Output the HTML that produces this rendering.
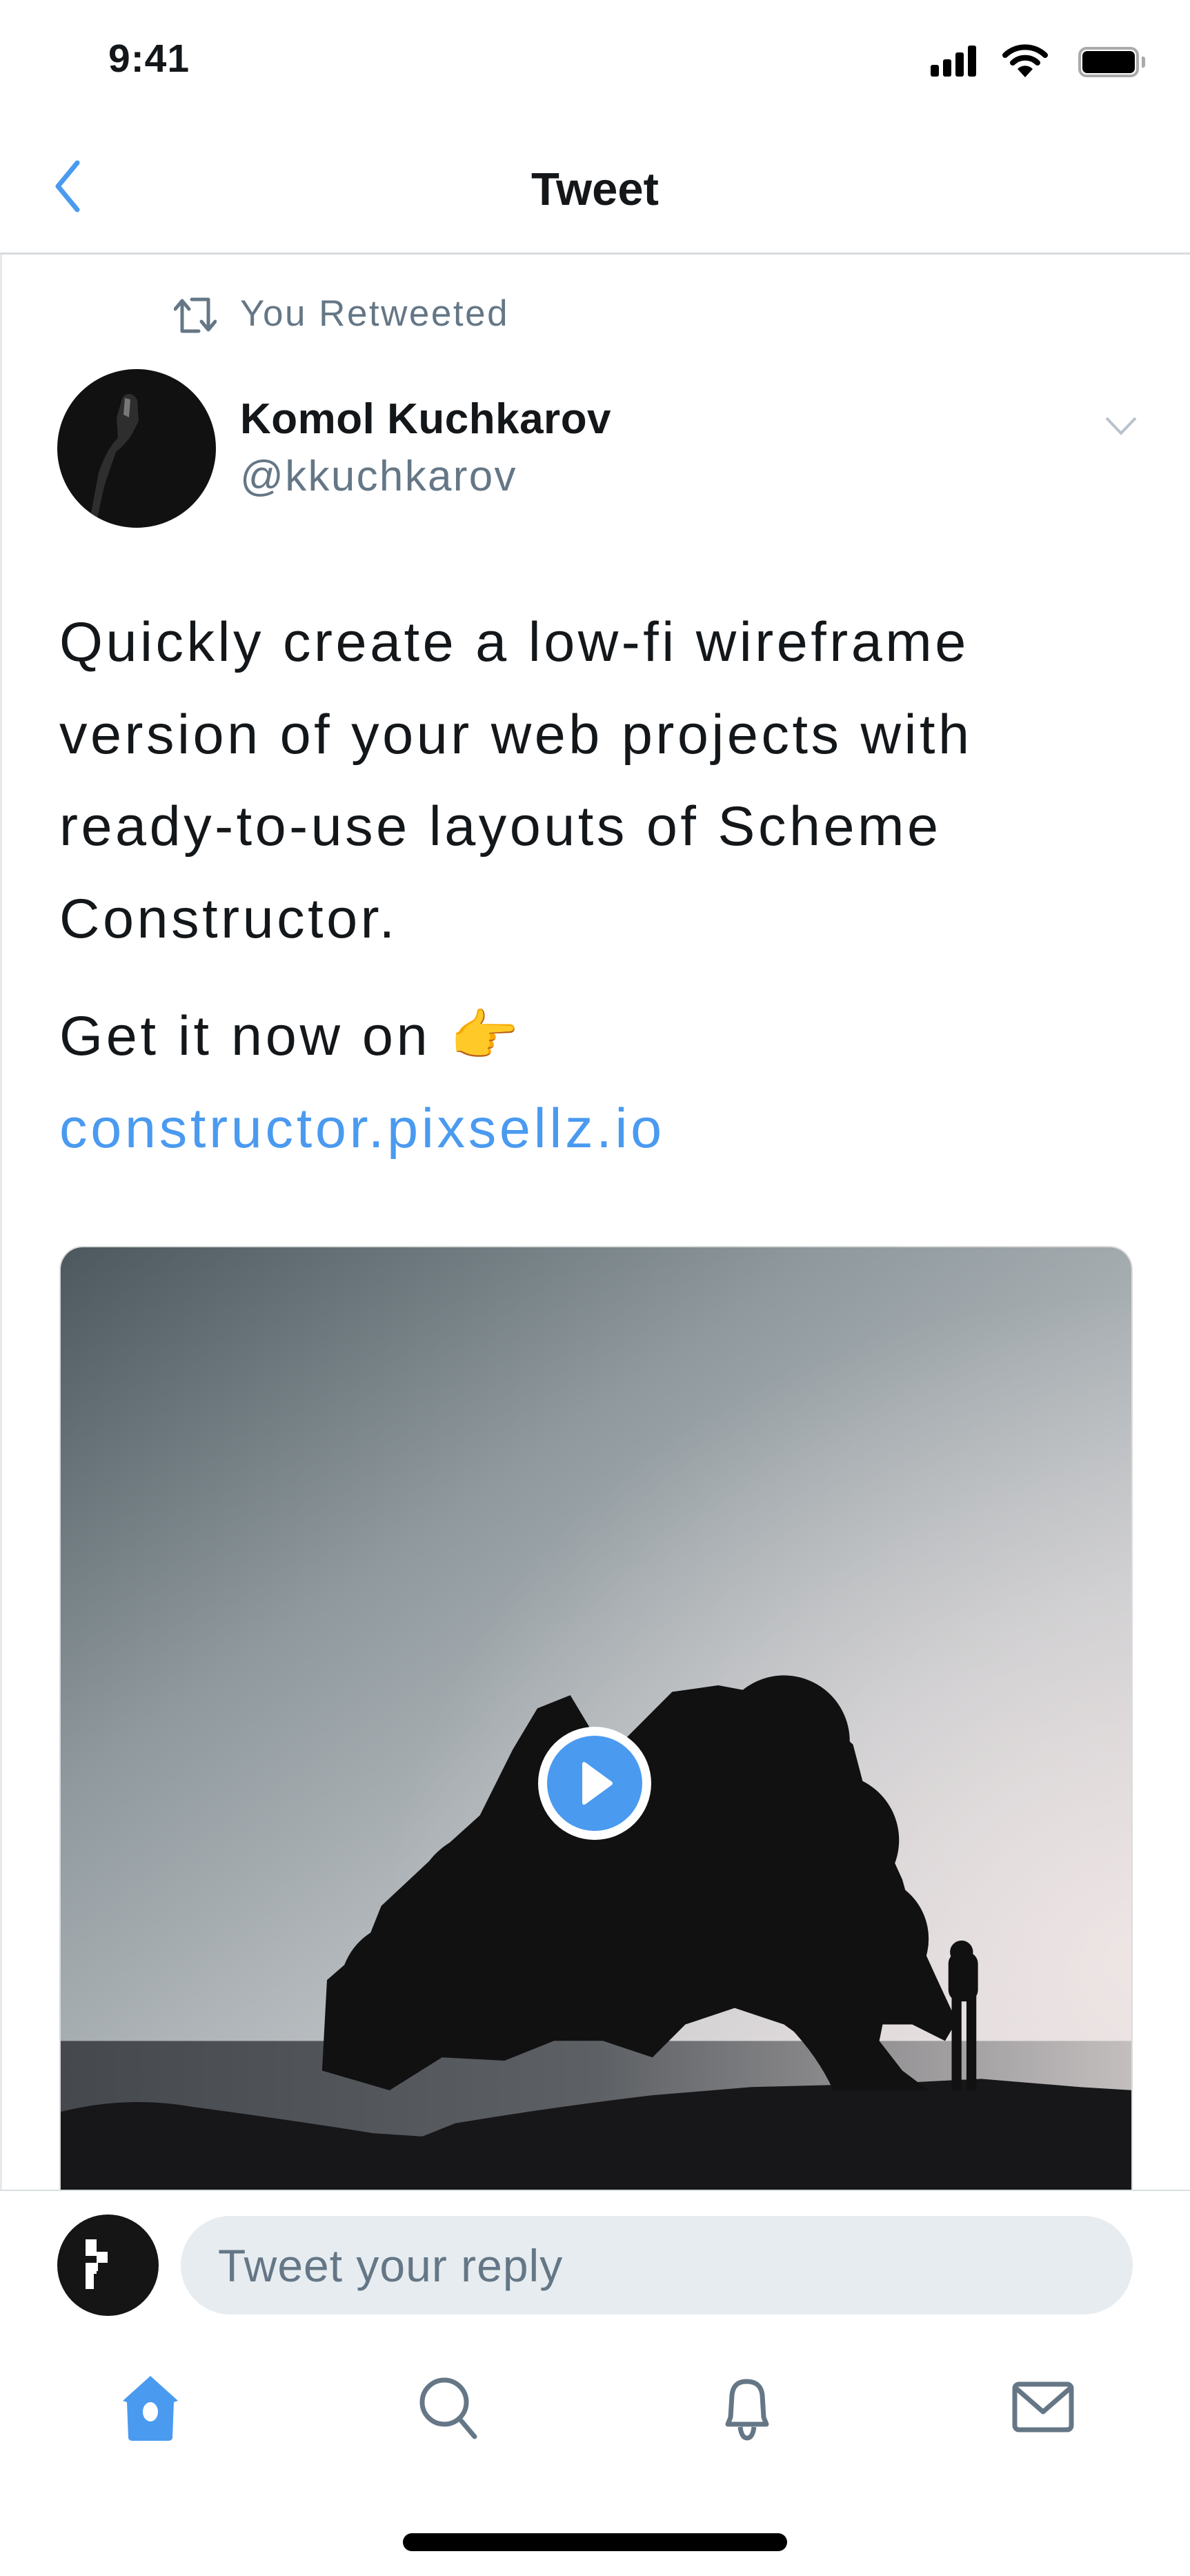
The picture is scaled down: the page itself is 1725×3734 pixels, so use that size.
<!DOCTYPE html>
<html><head><meta charset="utf-8"><style>
*{margin:0;padding:0;box-sizing:border-box}
body{width:1725px;height:3734px;background:#fff;position:relative;overflow:hidden;font-family:"Liberation Sans",Helvetica,Arial,sans-serif;color:#14171a}
.abs{position:absolute}
</style></head><body>
<div class="abs" style="left:157px;top:52px;font-size:57px;font-weight:bold;letter-spacing:1px">9:41</div>
<svg class="abs" style="left:1345px;top:64px" width="80" height="50" viewBox="0 0 80 50">
<rect x="4" y="30" width="12" height="17" rx="3" fill="#000"/><rect x="22" y="22" width="12" height="25" rx="3" fill="#000"/><rect x="40" y="12" width="12" height="35" rx="3" fill="#000"/><rect x="58" y="2" width="12" height="45" rx="3" fill="#000"/></svg>
<svg class="abs" style="left:1453px;top:60px" width="66" height="55" viewBox="0 0 66 55">
<path d="M4 20 A42 42 0 0 1 62 20" stroke="#000" stroke-width="8" fill="none" stroke-linecap="round"/>
<path d="M15 31 A26 26 0 0 1 51 31" stroke="#000" stroke-width="8" fill="none" stroke-linecap="round"/>
<path d="M33 52 L22 40 A15 15 0 0 1 44 40 Z" fill="#000"/></svg>
<div class="abs" style="left:1563px;top:68px;width:88px;height:44px;border:4px solid #aaa;border-radius:12px"></div>
<div class="abs" style="left:1569px;top:74px;width:76px;height:32px;background:#000;border-radius:7px"></div>
<div class="abs" style="left:1655px;top:82px;width:5px;height:16px;background:#aaa;border-radius:0 3px 3px 0"></div>
<svg class="abs" style="left:72px;top:230px" width="50" height="80" viewBox="0 0 50 80"><path d="M40 6 L12 40 L40 74" stroke="#4a9af0" stroke-width="7" fill="none" stroke-linecap="round" stroke-linejoin="round"/></svg>
<div class="abs" style="left:0;width:1725px;top:236px;text-align:center;font-size:67px;font-weight:bold">Tweet</div>
<div class="abs" style="left:0;top:366px;width:1725px;height:3px;background:#d8dce0"></div>
<div class="abs" style="left:0;top:369px;width:3px;height:2805px;background:#e6e9ec"></div>
<svg class="abs" style="left:252px;top:428px" width="62" height="58" viewBox="0 0 62 58">
<path d="M12 52 V10 M2 20 L12 8 L22 20 M12 52 H36" stroke="#657786" stroke-width="5" fill="none" stroke-linecap="round" stroke-linejoin="round"/>
<path d="M50 6 V48 M40 38 L50 50 L60 38 M50 6 H26" stroke="#657786" stroke-width="5" fill="none" stroke-linecap="round" stroke-linejoin="round"/></svg>
<div class="abs" style="left:348px;top:424px;font-size:53px;color:#657786;letter-spacing:2.5px">You Retweeted</div>
<svg class="abs" style="left:83px;top:535px" width="230" height="230" viewBox="0 0 230 230">
<defs><clipPath id="c"><circle cx="115" cy="115" r="115"/></clipPath></defs>
<circle cx="115" cy="115" r="115" fill="#111"/>
<g clip-path="url(#c)"><path d="M95 40 Q108 30 116 45 L118 75 L108 95 Q98 110 85 120 L68 170 L55 230 L45 230 L60 150 Q72 115 88 100 L86 70 Z" fill="#2e2e2e"/><path d="M98 42 L106 44 L104 70 L96 66 Z" fill="#777"/></g></svg>
<div class="abs" style="left:348px;top:572px;font-size:62px;font-weight:bold;letter-spacing:0.5px">Komol Kuchkarov</div>
<div class="abs" style="left:348px;top:655px;font-size:62px;color:#657786;letter-spacing:2.3px">@kkuchkarov</div>
<svg class="abs" style="left:1600px;top:600px" width="50" height="36" viewBox="0 0 50 36"><path d="M4 6 L25 28 L46 6" stroke="#b8c2cb" stroke-width="4" fill="none"/></svg>
<div class="abs" style="left:86px;top:865px;font-size:81px;line-height:133.5px;color:#14171a;width:1600px;letter-spacing:4.5px;white-space:nowrap">Quickly create a low-fi wireframe<br>version of your web projects with<br>ready-to-use layouts of Scheme<br>Constructor.</div>
<div class="abs" style="left:86px;top:1436px;font-size:81px;line-height:133.5px;letter-spacing:4.7px;white-space:nowrap">Get it now on <span style="color:#f4b400">👉</span><br><span style="color:#4a9af0">constructor.pixsellz.io</span></div>
<div class="abs" style="left:86px;top:1806px;width:1556px;height:1370px;border-radius:34px 34px 0 0;overflow:hidden;border:2px solid #dcdcdc;border-bottom:none">
<svg width="1556" height="1370" viewBox="0 0 653 574" preserveAspectRatio="none" style="display:block">
<defs>
<linearGradient id="sky" x1="0" y1="0" x2="0.8" y2="1"><stop offset="0" stop-color="#4c585e"/><stop offset="0.35" stop-color="#8f999e"/><stop offset="0.7" stop-color="#c2c5c8"/><stop offset="1" stop-color="#e2dcdc"/></linearGradient>
<radialGradient id="glow" cx="1" cy="0.75" r="0.7"><stop offset="0" stop-color="#f0e6e6" stop-opacity=".9"/><stop offset="1" stop-color="#e0dcdc" stop-opacity="0"/></radialGradient>
<linearGradient id="sea" x1="0" x2="1"><stop offset="0" stop-color="#45494d"/><stop offset="0.5" stop-color="#5d6064"/><stop offset="1" stop-color="#c4bfbf"/></linearGradient>
</defs>
<rect width="653" height="574" fill="url(#sky)"/>
<rect width="653" height="574" fill="url(#glow)"/>
<rect y="482" width="653" height="60" fill="url(#sea)"/>
<path d="M0 525 Q40 515 80 522 Q140 530 190 538 L220 540 L240 532 Q300 522 360 515 L420 510 L500 508 L560 505 L620 510 L653 512 V574 H0 Z" fill="#17171a"/>
<g fill="#111112">
<path d="M159 500 L162 445 L185 425 L195 400 L225 372 L255 345 L275 305 L290 280 L310 272 L322 292 L342 300 L372 270 L400 266 L432 272 L460 282 L482 302 L492 340 L502 362 L512 384 L522 420 L532 442 L545 470 L538 482 L518 472 L500 472 L498 482 L512 500 L528 512 L476 512 L468 492 L440 472 L410 462 L380 472 L360 492 L330 482 L300 482 L270 494 L232 492 L200 512 Z"/>
<circle cx="440" cy="300" r="40"/><circle cx="470" cy="360" r="40"/><circle cx="390" cy="320" r="40"/><circle cx="320" cy="340" r="40"/><circle cx="260" cy="400" r="45"/><circle cx="210" cy="450" r="40"/><circle cx="490" cy="420" r="38"/><circle cx="380" cy="400" r="50"/><circle cx="320" cy="440" r="40"/>
<path d="M440 470 Q460 490 470 512 L500 512 Q485 490 470 460 Z"/>
<rect x="540" y="428" width="18" height="30" rx="7"/><circle cx="548" cy="428" r="7"/><rect x="542" y="450" width="6" height="62"/><rect x="551" y="450" width="6" height="62"/>
</g>
</svg></div>
<div class="abs" style="left:780px;top:2503px;width:164px;height:164px;border-radius:50%;background:#fff"></div>
<div class="abs" style="left:793px;top:2516px;width:138px;height:138px;border-radius:50%;background:#4a9af0"></div>
<svg class="abs" style="left:840px;top:2552px" width="50" height="66" viewBox="0 0 50 66"><path d="M4 6 Q4 0 9 3 L46 30 Q50 33 46 36 L9 63 Q4 66 4 60 Z" fill="#fff"/></svg>
<div class="abs" style="left:0;top:3174px;width:1725px;height:560px;background:#fff;border-top:2px solid #dcdfe2"></div>
<div class="abs" style="left:83px;top:3210px;width:147px;height:147px;border-radius:50%;background:#151515"></div>
<svg class="abs" style="left:120px;top:3240px" width="60" height="90" viewBox="0 0 60 90"><rect x="4" y="6" width="16" height="24" fill="#fff"/><rect x="20" y="24" width="16" height="16" fill="#fff"/><rect x="4" y="40" width="16" height="16" fill="#fff"/><rect x="4" y="56" width="12" height="22" fill="#fff"/><rect x="16" y="40" width="6" height="12" fill="#fff"/></svg>
<div class="abs" style="left:262px;top:3212px;width:1380px;height:143px;border-radius:72px;background:#e6ecf0"></div>
<div class="abs" style="left:316px;top:3246px;font-size:66px;color:#657786;letter-spacing:1px">Tweet your reply</div>
<svg class="abs" style="left:168px;top:3440px" width="100" height="100" viewBox="0 0 100 100"><path d="M50 4 L90 40 L84 42 L82 94 Q81 98 76 98 H24 Q19 98 18 94 L16 42 L10 40 Z" fill="#4a9af0"/><ellipse cx="50" cy="56" rx="11" ry="14" fill="#fff"/></svg>
<svg class="abs" style="left:600px;top:3440px" width="100" height="100" viewBox="0 0 100 100"><circle cx="44" cy="42" r="32" stroke="#657786" stroke-width="7" fill="none"/><path d="M66 66 L88 92" stroke="#657786" stroke-width="7" stroke-linecap="round"/></svg>
<svg class="abs" style="left:1035px;top:3440px" width="100" height="100" viewBox="0 0 100 100"><path d="M20 74 L24 64 L26 32 Q28 12 47 12 Q68 12 70 32 L72 64 L76 74 Z" stroke="#657786" stroke-width="7" fill="none" stroke-linejoin="round"/><path d="M38 78 Q40 94 48 94 Q56 94 58 78" stroke="#657786" stroke-width="7" fill="none"/></svg>
<svg class="abs" style="left:1463px;top:3440px" width="100" height="100" viewBox="0 0 100 100"><rect x="8" y="16" width="82" height="66" rx="6" stroke="#657786" stroke-width="7" fill="none"/><path d="M10 22 L49 56 L88 22" stroke="#657786" stroke-width="7" fill="none" stroke-linejoin="round"/></svg>
<div class="abs" style="left:584px;top:3672px;width:557px;height:26px;border-radius:13px;background:#000"></div>
</body></html>
